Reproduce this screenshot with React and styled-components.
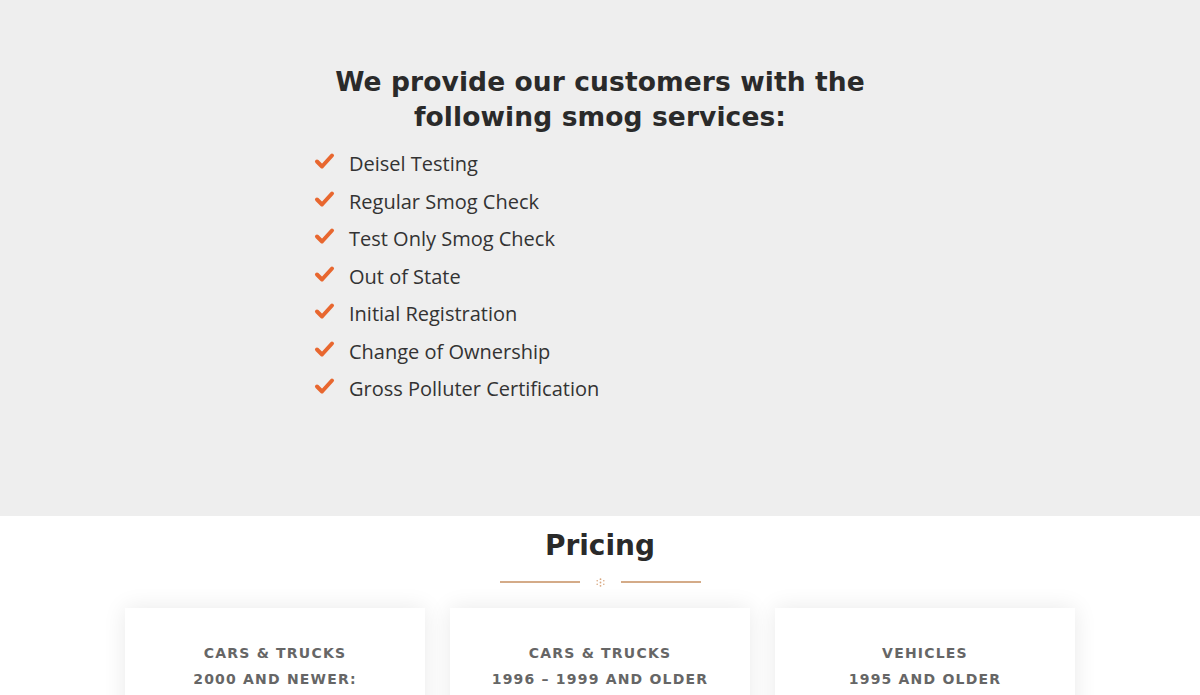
import React from 'react';
import styled, { createGlobalStyle } from 'styled-components';

const services = [
  'Deisel Testing',
  'Regular Smog Check',
  'Test Only Smog Check',
  'Out of State',
  'Initial Registration',
  'Change of Ownership',
  'Gross Polluter Certification',
];

const plans = [
  ['Cars & Trucks', '2000 and Newer:'],
  ['Cars & Trucks', '1996 – 1999 and Older'],
  ['Vehicles', '1995 and Older'],
];

const GlobalStyle = createGlobalStyle`
  html, body {
    margin: 0;
    padding: 0;
    background: #fff;
    font-family: "Open Sans", "Liberation Sans", sans-serif;
  }
`;

function Check() {
  return (
    <svg width="21" height="18" viewBox="0 0 21 18">
      <path
        d="M3 9.5 L8 14.5 L18 3.5"
        fill="none"
        stroke="#e8672f"
        strokeWidth="4"
        strokeLinecap="round"
        strokeLinejoin="round"
      />
    </svg>
  );
}

function Flake() {
  return (
    <svg width="9" height="9" viewBox="0 0 9 9">
      <g fill="#d9a77f">
        <circle cx="4.5" cy="1.2" r="0.9" />
        <circle cx="4.5" cy="7.8" r="0.9" />
        <circle cx="1.2" cy="2.8" r="0.8" />
        <circle cx="7.8" cy="2.8" r="0.8" />
        <circle cx="1.2" cy="6.2" r="0.8" />
        <circle cx="7.8" cy="6.2" r="0.8" />
        <circle cx="4.5" cy="4.5" r="0.9" />
      </g>
    </svg>
  );
}

function App() {
  return (
    <>
      <GlobalStyle />
      <Services>
        <Heading>
          We provide our customers with the
          <br />
          following smog services:
        </Heading>
        <List>
          {services.map((s) => (
            <Item key={s}>
              <Check />
              <span>{s}</span>
            </Item>
          ))}
        </List>
      </Services>
      <Pricing>
        <Title>Pricing</Title>
        <Divider>
          <Line />
          <Flake />
          <Line />
        </Divider>
        <Cards>
          {plans.map(([a, b], i) => (
            <Card key={i}>
              <CardTitle>
                {a}
                <br />
                {b}
              </CardTitle>
            </Card>
          ))}
        </Cards>
      </Pricing>
    </>
  );
}

const Services = styled.section`
  background: #eeeeee;
  height: 516px;
  padding-top: 64px;
  box-sizing: border-box;
`;

const Heading = styled.h2`
  margin: 0;
  text-align: center;
  font-family: "DejaVu Sans", sans-serif;
  font-weight: 700;
  font-size: 26.5px;
  line-height: 35px;
  color: #2a2a2a;
  letter-spacing: 0.1px;
`;

const List = styled.ul`
  list-style: none;
  margin: 11px 0 0;
  padding: 0 0 0 314px;
`;

const Item = styled.li`
  display: flex;
  align-items: center;
  gap: 14px;
  height: 37.5px;
  font-size: 20px;
  color: #333;
  font-family: "Open Sans", sans-serif;
  svg {
    flex: none;
    margin-top: -5px;
  }
`;

const Pricing = styled.section`
  height: 179px;
  padding-top: 11px;
  box-sizing: border-box;
  overflow: hidden;
`;

const Title = styled.h2`
  margin: 0;
  text-align: center;
  font-family: "DejaVu Sans", sans-serif;
  font-weight: 700;
  font-size: 28px;
  line-height: 38px;
  color: #2a2a2a;
`;

const Divider = styled.div`
  display: flex;
  align-items: center;
  justify-content: center;
  gap: 16px;
  margin-top: 11px;
  height: 12px;
`;

const Line = styled.span`
  width: 80px;
  height: 2px;
  background: #d4ab88;
`;

const Cards = styled.div`
  display: flex;
  justify-content: center;
  gap: 25px;
  margin-top: 20px;
  padding: 0 30px 30px;
`;

const Card = styled.div`
  width: 300px;
  height: 200px;
  background: #fff;
  box-shadow: 0 0 22px rgba(0, 0, 0, 0.09);
  padding-top: 32px;
  box-sizing: border-box;
`;

const CardTitle = styled.h3`
  margin: 0;
  text-align: center;
  text-transform: uppercase;
  font-family: "DejaVu Sans", sans-serif;
  font-weight: 700;
  font-size: 14px;
  line-height: 26px;
  letter-spacing: 1.2px;
  color: #666;
`;

export default App;
